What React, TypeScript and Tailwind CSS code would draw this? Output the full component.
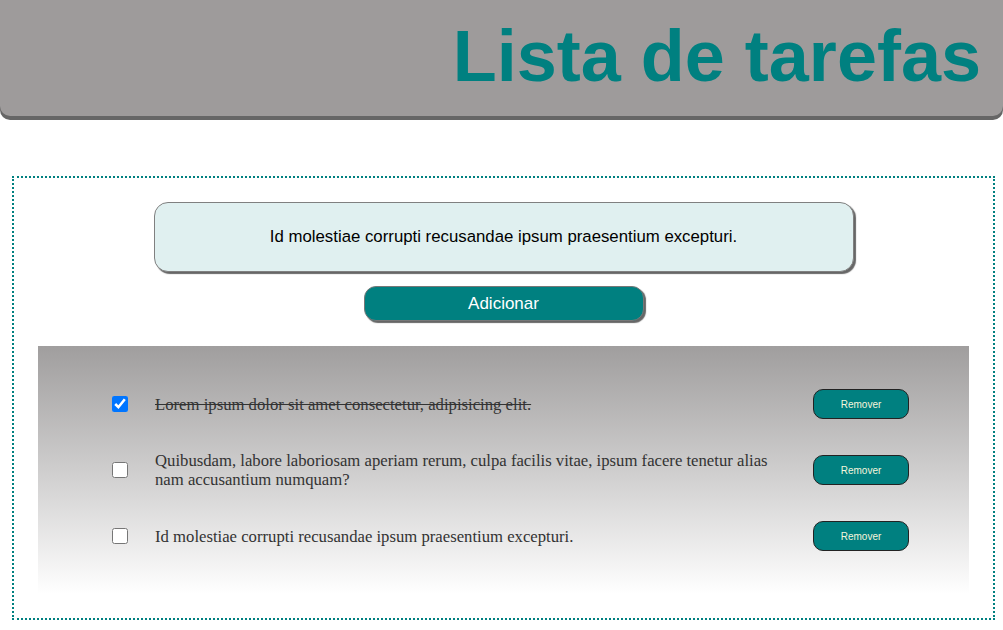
import { useState } from 'react';

type Tarefa = { id: number; texto: string; feita: boolean };

const inicial: Tarefa[] = [
	{ id: 1, texto: 'Lorem ipsum dolor sit amet consectetur, adipisicing elit.', feita: true },
	{
		id: 2,
		texto:
			'Quibusdam, labore laboriosam aperiam rerum, culpa facilis vitae, ipsum facere tenetur alias nam accusantium numquam?',
		feita: false,
	},
	{ id: 3, texto: 'Id molestiae corrupti recusandae ipsum praesentium excepturi.', feita: false },
];

export default function App() {
	const [tarefas, setTarefas] = useState<Tarefa[]>(inicial);
	const [nova, setNova] = useState('Id molestiae corrupti recusandae ipsum praesentium excepturi.');

	const adicionar = () => {
		if (!nova.trim()) return;
		setTarefas([...tarefas, { id: Date.now(), texto: nova, feita: false }]);
		setNova('');
	};

	return (
		<div className="min-h-[630px] bg-white font-['Liberation_Sans',Arial,sans-serif]">
			<header className="h-[116px] bg-[#9e9b9b] rounded-b-[10px] shadow-[0_4px_0_#666] flex justify-end pr-[22px] pt-[16px]">
				<h1 className="text-[72px] font-bold leading-[80px] text-[#008080]">Lista de tarefas</h1>
			</header>

			<main className="ml-3 mr-2 mt-[60px] border-2 border-dotted border-[#008080] px-6 pt-6 pb-6">
				<input
					value={nova}
					onChange={(e) => setNova(e.target.value)}
					className="block mx-auto w-[700px] h-[70px] rounded-[14px] border border-[#808080] bg-[#e0f0f0] shadow-[2px_2px_1px_#666] text-center text-[16.8px] text-black outline-none"
				/>
				<button
					onClick={adicionar}
					className="block mx-auto mt-[14px] w-[280px] h-[35px] rounded-[12px] border border-[#777] bg-[#008080] shadow-[2px_2px_1px_#666] text-[17px] text-white"
				>
					Adicionar
				</button>

				<ul className="mt-[25px] py-[25px] bg-linear-to-b from-[#a09e9e] to-white">
					{tarefas.map((t) => (
						<li key={t.id} className="flex items-center h-[66px] pl-[74px] pr-[60px]">
							<input
								type="checkbox"
								checked={t.feita}
								onChange={() =>
									setTarefas(tarefas.map((x) => (x.id === t.id ? { ...x, feita: !x.feita } : x)))
								}
								className="w-4 h-4 m-0 shrink-0"
							/>
							<span
								className={`flex-1 ml-[27px] mr-[24px] font-['Liberation_Serif','Times_New_Roman',serif] text-[16.7px] leading-[19px] text-[#333] ${
									t.feita ? 'line-through' : ''
								}`}
							>
								{t.texto}
							</span>
							<button
								onClick={() => setTarefas(tarefas.filter((x) => x.id !== t.id))}
								className="shrink-0 w-[96px] h-[30px] rounded-[10px] border border-[#222] bg-[#008080] text-[10px] text-[#f5f5dc]"
							>
								Remover
							</button>
						</li>
					))}
				</ul>
			</main>
		</div>
	);
}
